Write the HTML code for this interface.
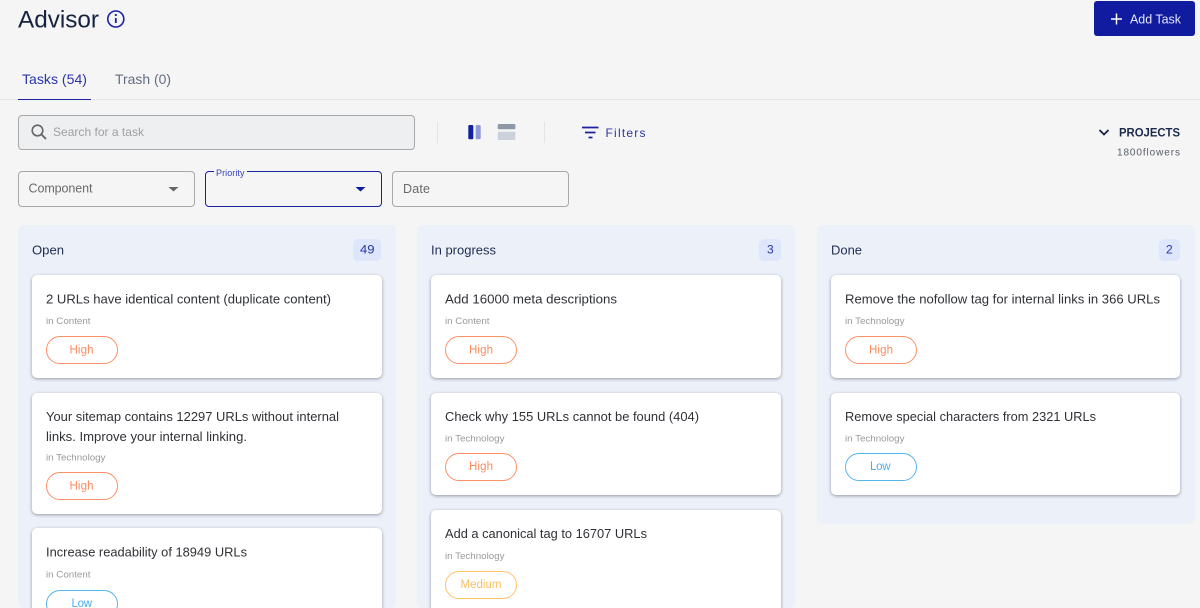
<!DOCTYPE html>
<html lang="en">
<head>
<meta charset="utf-8">
<title>Advisor</title>
<style>
html,body{margin:0;padding:0;width:1200px;height:608px;overflow:hidden;background:#f5f5f5}
#page{position:relative;width:1200px;height:608px;overflow:hidden;contain:paint}
.b{position:absolute;box-sizing:border-box}
.col{background:#ecf0f8;border-radius:6px}
.card{background:#fff;border-radius:5px;box-shadow:0 1px 3px rgba(40,45,70,.45)}
.pill{width:71.500px;height:28px;border-radius:14px;background:#fff;border:1px solid}
.h{border-color:#ff8f66}.l{border-color:#55b4ec}.m{border-color:#ffc266}
.badge{background:#dde6fb;border-radius:5px;height:22px}
.field{border:1px solid #a8a8a8;border-radius:4px}
svg{position:absolute;left:0;top:0}
text{font-family:"Liberation Sans",sans-serif;white-space:pre}
.t{font-size:13px;fill:#2f3136}
.s{font-size:9.5px;fill:#9a9a9a}
.p{font-size:11.5px}
.ch{font-size:13px;fill:#1f2d50}
.n{font-size:12px;fill:#2a35a8}
</style>
</head>
<body>
<div id="page">
<div class="b" style="left:1094px;top:1px;width:101px;height:35px;background:#111ba0;border-radius:3px"></div>
<div class="b" style="left:0;top:99px;width:1200px;height:1px;background:#e6e6e6"></div>
<div class="b" style="left:18px;top:98.500px;width:73px;height:1.500px;background:#1a22a0"></div>
<div class="b field" style="left:18px;top:114.500px;width:397px;height:35px;background:#eeeff0"></div>
<div class="b" style="left:437px;top:122px;width:1px;height:21px;background:#e4e4e4"></div>
<div class="b" style="left:544px;top:122px;width:1px;height:21px;background:#e4e4e4"></div>
<div class="b field" style="left:18px;top:171px;width:176.500px;height:35.500px"></div>
<div class="b field" style="left:205px;top:171px;width:176.500px;height:35.500px;border-color:#1a22a0"></div>
<div class="b" style="left:214px;top:168px;width:33px;height:6px;background:#f5f5f5"></div>
<div class="b field" style="left:392px;top:171px;width:176.500px;height:35.500px"></div>

<div class="b col" style="left:18px;top:225px;width:378px;height:383px"></div>
<div class="b col" style="left:417px;top:225px;width:378px;height:383px"></div>
<div class="b col" style="left:817px;top:225px;width:378px;height:299px"></div>
<div class="b badge" style="left:353px;top:239px;width:28px"></div>
<div class="b badge" style="left:759px;top:239px;width:22px"></div>
<div class="b badge" style="left:1159px;top:239px;width:21px"></div>

<div class="b card" style="left:32px;top:275px;width:350px;height:103px"></div>
<div class="b card" style="left:32px;top:393px;width:350px;height:121px"></div>
<div class="b card" style="left:32px;top:528px;width:350px;height:100px"></div>
<div class="b card" style="left:431px;top:275px;width:350px;height:103px"></div>
<div class="b card" style="left:431px;top:393px;width:350px;height:102px"></div>
<div class="b card" style="left:431px;top:510px;width:350px;height:120px"></div>
<div class="b card" style="left:831px;top:275px;width:349px;height:103px"></div>
<div class="b card" style="left:831px;top:393px;width:349px;height:102px"></div>

<div class="b pill h" style="left:46px;top:336px"></div>
<div class="b pill h" style="left:46px;top:472px"></div>
<div class="b pill l" style="left:46px;top:590px"></div>
<div class="b pill h" style="left:445px;top:336px"></div>
<div class="b pill h" style="left:445px;top:453px"></div>
<div class="b pill m" style="left:445px;top:571px"></div>
<div class="b pill h" style="left:845px;top:336px"></div>
<div class="b pill l" style="left:845px;top:453px"></div>

<svg width="1200" height="608" viewBox="0 0 1200 608" xmlns="http://www.w3.org/2000/svg">
<text x="18" y="27.500" font-size="24" fill="#16233f" textLength="81" lengthAdjust="spacingAndGlyphs">Advisor</text>
<circle cx="115.800" cy="19" r="8" fill="none" stroke="#1a22a0" stroke-width="1.600"/>
<path d="M115.800 18v5" stroke="#1a22a0" stroke-width="1.800" fill="none"/>
<circle cx="115.800" cy="15" r="1.100" fill="#1a22a0"/>
<path d="M1116.500 13.500v11M1111 19h11" stroke="#fff" stroke-width="1.500" fill="none"/>
<text x="1130" y="23.500" font-size="12.500" fill="#e6e8f8" textLength="51" lengthAdjust="spacingAndGlyphs">Add Task</text>
<text x="22" y="84" font-size="14" fill="#2a35a8" textLength="65" lengthAdjust="spacingAndGlyphs">Tasks (54)</text>
<text x="115" y="84" font-size="14" fill="#626d80" textLength="56" lengthAdjust="spacingAndGlyphs">Trash (0)</text>

<circle cx="37.500" cy="130.500" r="5.300" fill="none" stroke="#666" stroke-width="1.600"/>
<path d="M41.500 134.500l4.500 4.500" stroke="#666" stroke-width="1.900" fill="none"/>
<text x="53" y="136" font-size="12" fill="#a0a0a0" textLength="91" lengthAdjust="spacingAndGlyphs">Search for a task</text>

<rect x="468.300" y="125" width="5" height="14.300" rx="1.200" fill="#1220a0"/>
<rect x="475.700" y="125" width="5" height="14.300" rx="1.200" fill="#8f9ada"/>
<rect x="497.700" y="124" width="17.700" height="5.300" rx="1.200" fill="#8e99a8"/>
<rect x="497.700" y="131.700" width="17.700" height="8.300" rx="1.200" fill="#ccd2dc"/>
<path d="M582 127.500h16.500M585 132.500h10.500M588.500 137.500h4" stroke="#1a22a0" stroke-width="1.700" fill="none"/>
<text x="605.500" y="137" class="n" textLength="40" lengthAdjust="spacing">Filters</text>
<path d="M1099.500 130l4.500 4.500 4.500-4.500" stroke="#16233f" stroke-width="1.800" fill="none"/>
<text x="1119" y="136.500" font-size="12" font-weight="700" fill="#1c2a4a" textLength="61" lengthAdjust="spacingAndGlyphs">PROJECTS</text>
<text x="1117" y="155.500" font-size="10" fill="#565c68" textLength="63" lengthAdjust="spacing">1800flowers</text>

<text x="28.500" y="192.500" font-size="12.500" fill="#6a6a6a" textLength="64" lengthAdjust="spacing">Component</text>
<path d="M168.500 187h10l-5 4.500z" fill="#666"/>
<text x="216" y="176" font-size="9" fill="#3542b8" textLength="28.500" lengthAdjust="spacing">Priority</text>
<path d="M355.500 187h10l-5 4.500z" fill="#111ba0"/>
<text x="403" y="193" font-size="12.500" fill="#6a6a6a" textLength="27" lengthAdjust="spacing">Date</text>

<text x="32" y="254.500" class="ch" textLength="32" lengthAdjust="spacingAndGlyphs">Open</text>
<text x="431" y="254.500" class="ch" textLength="65" lengthAdjust="spacingAndGlyphs">In progress</text>
<text x="831" y="254.500" class="ch" textLength="31" lengthAdjust="spacingAndGlyphs">Done</text>
<text x="360" y="253.500" class="n" textLength="14.500" lengthAdjust="spacingAndGlyphs">49</text>
<text x="767" y="253.500" class="n">3</text>
<text x="1166" y="253.500" class="n">2</text>

<text x="46" y="303.500" class="t" textLength="285" lengthAdjust="spacingAndGlyphs">2 URLs have identical content (duplicate content)</text>
<text x="46" y="324" class="s" textLength="44.500" lengthAdjust="spacingAndGlyphs">in Content</text>
<text x="69.500" y="353.500" class="p" fill="#ff8a5c" textLength="24" lengthAdjust="spacing">High</text>

<text x="46" y="421" class="t" textLength="293" lengthAdjust="spacingAndGlyphs">Your sitemap contains 12297 URLs without internal</text>
<text x="46" y="441" class="t" textLength="201" lengthAdjust="spacingAndGlyphs">links. Improve your internal linking.</text>
<text x="46" y="460.500" class="s" textLength="59.500" lengthAdjust="spacingAndGlyphs">in Technology</text>
<text x="69.500" y="489.500" class="p" fill="#ff8a5c" textLength="24" lengthAdjust="spacing">High</text>

<text x="46" y="556.500" class="t" textLength="201" lengthAdjust="spacingAndGlyphs">Increase readability of 18949 URLs</text>
<text x="46" y="577.500" class="s" textLength="44.500" lengthAdjust="spacingAndGlyphs">in Content</text>
<text x="71.500" y="607" class="p" fill="#4aaeea" textLength="20.500" lengthAdjust="spacing">Low</text>

<text x="445" y="303.500" class="t" textLength="172" lengthAdjust="spacingAndGlyphs">Add 16000 meta descriptions</text>
<text x="445" y="324" class="s" textLength="44.500" lengthAdjust="spacingAndGlyphs">in Content</text>
<text x="469" y="353.500" class="p" fill="#ff8a5c" textLength="24" lengthAdjust="spacing">High</text>

<text x="445" y="421" class="t" textLength="254" lengthAdjust="spacingAndGlyphs">Check why 155 URLs cannot be found (404)</text>
<text x="445" y="441.500" class="s" textLength="59.500" lengthAdjust="spacingAndGlyphs">in Technology</text>
<text x="469" y="470" class="p" fill="#ff8a5c" textLength="24" lengthAdjust="spacing">High</text>

<text x="445" y="538" class="t" textLength="202" lengthAdjust="spacingAndGlyphs">Add a canonical tag to 16707 URLs</text>
<text x="445" y="559" class="s" textLength="59.500" lengthAdjust="spacingAndGlyphs">in Technology</text>
<text x="460.500" y="588" class="p" fill="#ffbe5e" textLength="41" lengthAdjust="spacing">Medium</text>

<text x="845" y="303.500" class="t" textLength="315" lengthAdjust="spacingAndGlyphs">Remove the nofollow tag for internal links in 366 URLs</text>
<text x="845" y="324" class="s" textLength="59.500" lengthAdjust="spacingAndGlyphs">in Technology</text>
<text x="869" y="353.500" class="p" fill="#ff8a5c" textLength="24" lengthAdjust="spacing">High</text>

<text x="845" y="421" class="t" textLength="251" lengthAdjust="spacingAndGlyphs">Remove special characters from 2321 URLs</text>
<text x="845" y="441.500" class="s" textLength="59.500" lengthAdjust="spacingAndGlyphs">in Technology</text>
<text x="870" y="470" class="p" fill="#4aaeea" textLength="20.500" lengthAdjust="spacing">Low</text>
</svg>
</div>
</body>
</html>
